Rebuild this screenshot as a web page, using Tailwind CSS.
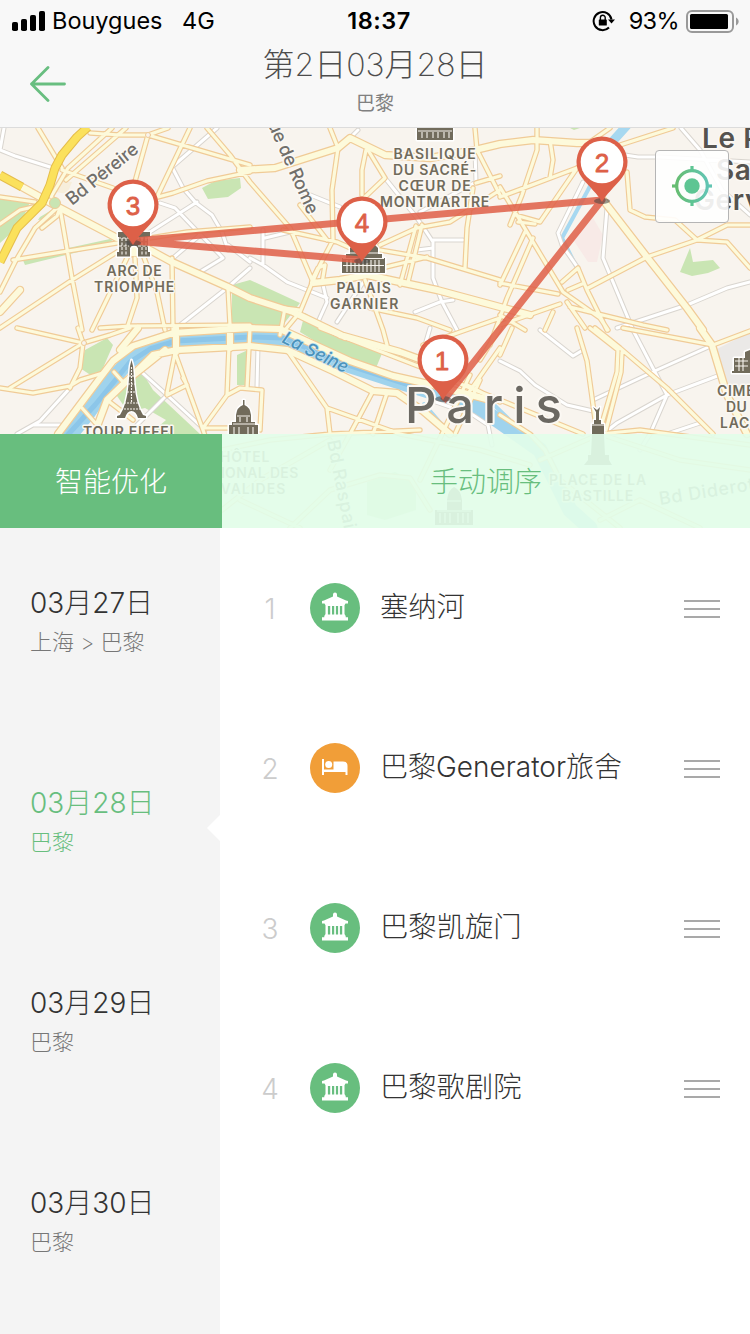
<!DOCTYPE html>
<html lang="zh-CN">
<head>
<meta charset="utf-8">
<title>第2日03月28日</title>
<script src="https://cdn.jsdelivr.net/npm/@tailwindcss/browser@4"></script>
</head>
<body class="w-[750px] h-[1334px] overflow-hidden bg-white font-['Inter','Noto_Sans_CJK_SC',sans-serif]">

<svg width="0" height="0" class="hidden">
  <defs>
    <symbol id="museum" viewBox="0 0 26 29">
      <path fill="#fff" d="M11 2.500a2 2 0 0 1 4 0V4.500l9 4 2 .5v2.500h-2.500l-1 1.700v8.800l1.200 2H26V28.400H0V25.200h2.300v-1.200l1.200-2v-8.800l-1-1.700H0V9l2-.5 9-4z"/>
      <path fill="#68be80" d="M5.900 14h2.300v8.500H5.900zM10 14h2.200v8.500H10zM13.900 14h2.200v8.500h-2.200zM17.900 14h2.300v8.500h-2.300zM23.700 25.200V24H26v1.200z"/>
    </symbol>
    <symbol id="bed" viewBox="0 0 26 18">
      <path fill="#fff" d="M0 0h2v10.500h9.500V2.500H21c3 0 4.500 1.500 4.500 4.500v9h-2v-3H2v3H0z"/>
      <circle cx="6.700" cy="5.600" r="3.500" fill="#fff"/>
    </symbol>
    <symbol id="grip" viewBox="0 0 36 20"><path d="M0 2h36M0 10h36M0 18h36" stroke="#a9a9a9" stroke-width="2"/></symbol>
    <g id="pin">
      <path d="M0 40C-4 32.500-13 24.500-19.800 16A25.500 25.500 0 1 1 19.800 16C13 24.500 4 32.500 0 40Z" fill="#dd6048"/>
      <circle r="21.300" fill="#fff"/>
    </g>
  </defs>
</svg>

<header class="flex h-[128px] flex-col border-b border-[#dcdcdc] bg-[#f8f8f8]">
  <div class="grid h-10 grid-cols-3 items-center text-[23.500px] leading-10 text-black">
    <div class="flex items-center pl-3 pt-px">
      <svg class="h-5 w-[33px]" viewBox="0 0 33 20"><rect y="11" width="6" height="9" rx="1.800"/><rect x="9" y="8" width="6" height="12" rx="1.800"/><rect x="18" y="4" width="6" height="16" rx="1.800"/><rect x="27" width="6" height="20" rx="1.800"/></svg>
      <span class="ml-[7px] w-[111px] whitespace-nowrap">Bouygues</span>
      <span class="ml-[19px]">4G</span>
    </div>
    <div class="pl-2 pt-px text-center font-semibold tracking-[0.5px]">18:37</div>
    <div class="flex items-center justify-end pr-[11px] pt-px">
      <svg class="mr-[13px] h-[22px] w-6" viewBox="0 0 24 22" fill="none" stroke="#000" stroke-width="2"><path d="M17 17.500A9 9 0 1 1 19.500 9.500"/><path d="M16 9.500h7l-3.500 4z" fill="#000" stroke="none"/><rect x="6.800" y="9.500" width="8" height="6" rx=".6" fill="#000" stroke="none"/><path d="M8.400 10V7.600a2.400 2.400 0 0 1 4.800 0V10" stroke-width="1.400"/></svg>
      <span class="mr-[7px] tracking-[-0.6px]">93%</span>
      <svg class="h-[23px] w-[53px]" viewBox="0 0 53 23"><rect x="1" y="1" width="46" height="21" rx="5" fill="none" stroke="#999" stroke-width="2"/><rect x="4" y="4" width="38" height="15" rx="1.500"/><path d="M50 7.500c3.500 1.500 3.500 6.500 0 8z" fill="#999"/></svg>
    </div>
  </div>
  <div class="grid flex-1 grid-cols-[100px_1fr_100px] items-center">
    <svg class="ml-[29px] h-9 w-[38px]" viewBox="0 0 38 36" fill="none" stroke="#68be80" stroke-width="2.800" stroke-linecap="round" stroke-linejoin="round"><path d="M19 1.500L2.500 18 19 34.500M2.500 18h33"/></svg>
    <div class="flex flex-col items-center">
      <h1 class="-mt-[5px] whitespace-nowrap text-[32px] leading-[46px] font-extralight text-[#4c4c4c]">第2日03月28日</h1>
      <p class="text-[19px] leading-8 text-[#808080]">巴黎</p>
    </div>
  </div>
</header>

<section class="relative h-[400px] overflow-hidden">
<svg class="block h-[400px] w-[750px]" viewBox="0 128 750 400" fill="none" stroke-linejoin="round" stroke-linecap="round">
  <defs>
    <path id="minor" d="M4 128L0 150L15 156L50 167M217 128L172 167L183 188L196 203L212 215L222 232L228 250M160 203L175 208L198 232L223 258L200 272M150 232L197 202M180 325L227 288L250 268M173 258L200 235M228 245L250 262M250 258L263 265L287 282L327 298M263 230V265M265 238L290 232M303 192L340 207M385 178L417 218L433 242V278L442 302L457 330M433 240H463M417 250L433 248M323 285L327 302L318 322M415 312L440 302L453 300M358 130L350 138M366 278L337 322M475 150L476 182L420 212M607 208L603 258L633 330L667 395L650 434L640 450M583 182L558 233L562 245L578 268M625 155L638 157L660 157L750 162M681 128L700 150L722 190L750 215M617 328L687 305L727 288L750 282M593 400L657 370L713 345M603 434L617 423L667 395L720 375M540 330L573 356L583 350M500 361L520 371L535 385L567 405L593 411M667 434L700 423M137 368L167 395L137 425M167 395L205 430M70 388L40 421L17 434M33 425H60M258 346L257 387M373 391L350 434M430 400L473 415L488 425L492 445M430 328L425 345"/>
    <path id="road" d="M38 128L62 168M112 128L68 168L52 195M126 128L66 180M90 133L120 135L148 135L168 128M148 135L250 165M148 135L134 185M190 128L157 197M207 128L230 155L250 182L290 228L313 282M62 170L113 188M158 197L173 193L207 181L250 172M60 208L72 278L82 330M13 260L117 243M0 328L72 280L117 252M92 330L127 258M128 325L137 298L135 258M143 255L157 292L165 330M172 258L173 330M100 328L130 326L250 325M228 288L230 325M150 238L187 232L250 227M0 197L35 202M0 224L20 210L42 205M57 208L35 228L28 240L15 262L0 292M50 195L60 208L57 216L42 228M330 128L338 148L332 190L333 240L320 265L312 283L300 312L285 330M366 150L362 170V195M368 150L385 178L365 197M283 230L337 242L355 250M300 205L327 240M365 280L383 330L387 345M380 245L417 228L450 222L500 190M380 250L427 258L500 280M422 225L408 282M416 226L400 285M382 268L427 257M475 128L477 150L500 195M473 188L467 228L465 268M476 183L500 176M370 308L417 318L450 330M318 268L325 265L322 283L312 280ZM300 310L285 308L280 335M537 128V150L522 195L510 225M550 140L553 160L550 178M500 197L577 168M500 187L527 232L563 292L600 318L608 330M627 172L630 210L645 217L675 220L697 240M588 288L647 257L697 240L727 225L750 225M697 240L727 242L750 268M525 232L500 285M533 238L507 298L490 345M515 215L540 222L577 168M518 222L535 224M500 283L558 294M560 304L500 325M562 282L578 268L587 290L607 330M568 290L582 284M570 307L643 325L667 330M567 302L585 328M545 330L553 312M500 315L525 330M620 145L673 128M590 142L610 128M17 328L83 343L110 335L130 328M83 343L78 328M83 343L80 368L70 388M10 388L80 345M0 388L33 393L70 386L80 380L103 373M175 353L167 393M175 353L203 430L210 450M167 395L187 385L183 378M229 346L227 395L203 428M203 428H230M227 395L240 388L262 390L260 430M247 388L250 328M82 408L98 426M107 400L133 420M114 372L123 382M287 350L327 408L330 434M327 408L400 434L480 450L530 465M373 391L350 434L330 470M387 393L373 434M320 328L423 368L470 388L500 400L583 434M383 330L387 345M500 348L467 395M470 375L443 432L420 480M480 380L455 434M467 385L500 402M500 328L480 360M500 415L530 434L545 450M577 328L587 361L597 434L590 460M595 328L620 348L667 388L713 434M590 328L618 350L617 372L600 430M622 352L621 372L606 430M623 328L713 345L750 331M512 328L500 355M423 345L500 318M222 450L270 440L330 434L420 430M222 510L260 480L330 440M240 500L300 528M290 528L330 490L380 475L410 478L430 510M540 460L600 434L680 460L750 470M600 434L640 430L750 445M545 450L560 480L620 528M600 520L640 500L700 528"/>
    <path id="avenue" d="M22 187L60 208L117 238M150 250L172 262L228 287L250 298L293 312L345 337M240 170L275 168L338 148L350 138L385 155L430 158L475 150L500 144L533 140L577 143L590 143M313 283L340 280L367 275L437 290L500 307L530 315M603 200L647 257L687 308L703 330M58 434L100 378L113 361L133 346L173 333L250 328L280 329L350 361L393 376L433 385L490 400M98 424L107 400L133 375L153 355L177 350L250 346L287 350L333 371L373 391L397 393L423 411L450 434M176 328V352M230 328V348M700 328L712 345L727 395L747 434M340 335L400 352L430 363M0 312L20 290M125 382L165 350M120 350L138 328"/>
    <path id="motorway" d="M88 127L77 137L62 155L55 168L50 185L42 203L17 228L10 242L0 262M0 175L22 187"/>
  </defs>

  <rect y="128" width="750" height="400" fill="#f8f4ee"/>
  <path fill="#c9e5b3" d="M0 198L30 202L20 225L0 243ZM202 188L215 181L240 178L241 188L228 197L208 199ZM22 258L110 239L115 243L25 265ZM40 217L50 211L53 213L45 219L38 220ZM232 285L250 280L300 303L283 325H232ZM305 313L345 337L383 351L376 368L333 352L300 332ZM680 272L690 248L693 262L713 260L720 268L708 273L692 276ZM85 350L107 338L113 345L103 368L95 378L80 368ZM115 393L142 372L153 390L200 434H150L166 420L145 408L128 412ZM237 355L248 350V385H237ZM570 128H580L574 130ZM367 482L395 472L416 483V510L385 520L367 515Z"/>
  <path fill="#f8eae7" d="M572 238L593 218L603 235L597 262L588 262Z"/>
  <path fill="#ebe9e7" d="M715 350L750 332V390L730 390Z"/>
  <path fill="#f7eedb" d="M60 180L72 182L67 194L56 192Z"/>
  <path stroke="#9fd3ed" stroke-width="15" d="M62 445L88 413L110 382L128 362L150 348L176 341L250 337L283 338L345 364L400 382L432 392L475 405L500 422L540 450L570 510L590 528"/>
  <path stroke="#8cc6e9" stroke-width="5" d="M65 438L95 405L130 362L150 349L176 341L250 337L283 338L345 364L400 382L432 392"/>
  <path stroke="#a7d8f0" stroke-width="9" d="M630 122L612 142"/>
  <path stroke="#a7d8f0" stroke-width="4" d="M612 142L588 190L562 238L578 270M424 404L450 434M492 403L520 430"/>

  <use href="#minor" stroke="#d9d5cf" stroke-width="5"/>
  <use href="#minor" stroke="#fff" stroke-width="3"/>
  <use href="#road" stroke="#f0cb97" stroke-width="5.500"/>
  <use href="#avenue" stroke="#f0cb97" stroke-width="8.500"/>
  <circle cx="134" cy="243" r="14" fill="#fdfadb" stroke="#f0cb97" stroke-width="1.500"/>
  <use href="#road" stroke="#fdfadb" stroke-width="3.200"/>
  <use href="#avenue" stroke="#fdfadb" stroke-width="6"/>
  <circle cx="55" cy="203" r="5.500" fill="#c9e5b3" stroke="#f0cb97"/>
  <circle cx="148" cy="135" r="2.500" fill="#f8f4ee" stroke="#f0cb97"/>
  <circle cx="84" cy="343" r="2.500" fill="#f8f4ee" stroke="#f0cb97"/>
  <use href="#motorway" stroke="#e5bd4b" stroke-width="9" stroke-linecap="butt"/>
  <use href="#motorway" stroke="#fbe15c" stroke-width="7" stroke-linecap="butt"/>

  <g stroke="#fff" stroke-width="3" paint-order="stroke" fill="#716b5b">
    <path d="M118 232H150V237H148V252H150V256.500H138V248A4.500 4.500 0 0 0 130 248V256.500H117V252H119V237H118Z"/>
    <path d="M342 273V258H346V254H350V248L354 244H374L378 248V254H382V258H385V273Z"/>
    <path d="M417 140V128H453V140Z"/>
    <path d="M117 418V416L120 415Q127 404 128.500 385L130 366L131.500 360L133 366L134.500 385Q136 404 143 415L146 416V418H138Q136 411 131.500 411Q127 411 125 418Z"/>
    <path d="M229 434V425H232V422H236V415Q237 407 243 405V400H244.500V405Q250 407 251 415V422H255V425H258V434Z"/>
    <path d="M592 434V424H594V420H596V412L593 407L597 410L600 407L599 412V420H601V424H604V434L605 455H609V460L612 465H584L588 460V455H591Z"/>
    <path d="M732 373V371H734V358H745V352L750 350V373Z"/>
    <path d="M435 525V510H447V500Q448 490 454 487Q461 490 462 500V510H473V525Z"/>
  </g>
  <g stroke="#f8f4ee" stroke-width="1.100" stroke-linecap="butt">
    <path d="M118 238H149M119 246H129M138 246H149M122 238V256M126 238V256M142 238V256M146 238V256" stroke-dasharray="3 1.500"/>
    <path d="M343 258.500H384M343 265.500H384M347 260V272M351 260V272M355 260V272M359 260V272M363 260V272M367 260V272M371 260V272M375 260V272M379 260V272M350 253H378"/>
    <path d="M418 131H452M422 132V138M427 132V138M433 132V138M438 132V138M444 132V138M449 132V138"/>
    <path d="M129 376H134M128 384H135M127 392H136M124 403H139M121 409H142M131.500 367V402" stroke-dasharray="2 1"/>
    <path d="M237 416H250M233 424H255M234 427V434M239 427V434M248 427V434M253 427V434M240 417V422M247 417V422M592 425H604"/>
    <path d="M735 361H748M735 366H748M739 358V371M743 353V371M447 501H461M437 511H471M440 513V523M445 513V523M450 513V523M458 513V523M463 513V523M468 513V523"/>
  </g>

  <g font-family="Inter, sans-serif" stroke="#fbf8f3" stroke-width="3" paint-order="stroke">
    <g font-size="14" font-weight="600" fill="#716b5b" text-anchor="middle" letter-spacing=".7">
      <text x="134.500" y="275.500" textLength="56">ARC DE</text>
      <text x="134.500" y="291.500" textLength="81">TRIOMPHE</text>
      <text x="364" y="293" textLength="55">PALAIS</text>
      <text x="364.500" y="309" textLength="69">GARNIER</text>
      <text x="435" y="159" textLength="83">BASILIQUE</text>
      <text x="435" y="175" textLength="84">DU SACRÉ-</text>
      <text x="435" y="191" textLength="73">CŒUR DE</text>
      <text x="435" y="207" textLength="110">MONTMARTRE</text>
      <text x="130.500" y="437" textLength="95">TOUR EIFFEL</text>
      <text x="245" y="462" textLength="50">HÔTEL</text>
      <text x="245" y="478" textLength="108">NATIONAL DES</text>
      <text x="245" y="494" textLength="82">INVALIDES</text>
      <text x="598" y="485" textLength="98">PLACE DE LA</text>
      <text x="598" y="501" textLength="72">BASTILLE</text>
      <text x="717" y="396" text-anchor="start" textLength="81">CIMETIÈRE</text>
      <text x="726" y="412" text-anchor="start" textLength="62">DU PÈRE</text>
      <text x="720" y="428" text-anchor="start" textLength="76">LACHAISE</text>
    </g>
    <g font-size="18" font-weight="500" fill="#716f6b">
      <text transform="translate(72 206) rotate(-39)" textLength="87">Bd Péreire</text>
      <text transform="translate(263 114) rotate(66)" textLength="111">Rue de Rome</text>
      <text transform="translate(327 441) rotate(79)" textLength="95">Bd Raspail</text>
      <text transform="translate(660 505) rotate(-9)" textLength="96">Bd Diderot</text>
    </g>
    <text transform="translate(281 342) rotate(26)" font-size="17.500" font-weight="500" font-style="italic" fill="#4a92bb" stroke="#bfe0f1" stroke-width="1.500" textLength="71">La Seine</text>
    <g font-size="28" font-weight="600" fill="#55534f" letter-spacing=".6">
      <text x="702" y="148">Le Pré-</text>
      <text x="716" y="180">Saint-</text>
      <text x="694" y="210">Gervais</text>
    </g>
    <text x="405" y="423" font-size="49" font-weight="500" fill="#6b6862" stroke-width="4" textLength="157" lengthAdjust="spacing">Paris</text>
  </g>

  <g stroke="#df6048" stroke-opacity=".86" stroke-width="7" stroke-linecap="butt">
    <path d="M443 401L602 200L133 241L362 260"/>
  </g>
  <g fill="#444" fill-opacity=".55"><ellipse cx="602" cy="201" rx="8" ry="3"/><ellipse cx="443" cy="399" rx="8" ry="3"/><ellipse cx="133" cy="243" rx="8" ry="3"/><ellipse cx="362" cy="261" rx="8" ry="3"/></g>
  <use href="#pin" x="133" y="205"/><use href="#pin" x="602" y="162"/><use href="#pin" x="362" y="222"/><use href="#pin" x="443" y="360"/>
  <g font-family="Liberation Sans, sans-serif" font-size="26" stroke="#dd6048" stroke-width=".8" fill="#dd6048" text-anchor="middle">
    <text x="133" y="215">3</text><text x="602" y="172">2</text><text x="362" y="232">4</text><text x="442" y="370">1</text>
  </g>
</svg>

  <button class="absolute left-[655px] top-[22px] flex h-[73px] w-[74px] items-center justify-center rounded-[4px] border border-[#b5b5b5] bg-white/90">
    <svg class="-mt-px h-[42px] w-[42px]" viewBox="0 0 42 42" fill="none" stroke-width="3.200"><defs><linearGradient id="loc"><stop stop-color="#66bd72"/><stop offset="1" stop-color="#62c5b3"/></linearGradient></defs><circle cx="21" cy="21" r="15.300" stroke="url(#loc)"/><circle cx="21" cy="21" r="7.700" fill="#5ec593"/><path d="M21 1v6M21 35v6" stroke="#5ec593"/><path d="M1 21h6" stroke="#66bd72"/><path d="M35 21h6" stroke="#62c5b3"/></svg>
  </button>

  <div class="absolute inset-x-0 bottom-0 flex h-[94px] text-[28px] font-light">
    <button class="w-[222px] bg-[#68be7e] pt-0.5 text-white">智能优化</button>
    <button class="flex-1 bg-[#e2fde9]/92 pt-0.5 text-[#68be7e]">手动调序</button>
  </div>
</section>

<main class="flex h-[806px]">
  <aside class="w-[220px] bg-[#f4f4f4]">
    <div class="h-[200px] pl-[30px] pt-[55px]"><p class="text-[28px] leading-[41px] font-light text-[#333]">03月27日</p><p class="text-[22px] leading-9 font-extralight text-[#777]">上海 &gt; 巴黎</p></div>
    <div class="relative h-[200px] pl-[30px] pt-[55px] text-[#68be7e]"><p class="text-[28px] leading-[41px] font-light">03月28日</p><p class="text-[22px] leading-9 font-light">巴黎</p>
      <svg class="absolute right-0 top-[87px] h-[26px] w-[13px]" viewBox="0 0 13 26"><path d="M13 0v26L0 13z" fill="#fff"/></svg></div>
    <div class="h-[200px] pl-[30px] pt-[55px]"><p class="text-[28px] leading-[41px] font-light text-[#333]">03月29日</p><p class="text-[22px] leading-9 font-extralight text-[#777]">巴黎</p></div>
    <div class="h-[200px] pl-[30px] pt-[55px]"><p class="text-[28px] leading-[41px] font-light text-[#333]">03月30日</p><p class="text-[22px] leading-9 font-extralight text-[#777]">巴黎</p></div>
  </aside>
  <ul class="flex-1">
    <li class="flex h-40 items-center pr-[30px]"><span class="w-[90px] pl-[10px] pt-px text-center text-[28px] font-light text-[#ccc]">1</span><span class="flex size-[50px] items-center justify-center rounded-full bg-[#68be7e]"><svg class="-mt-[3px] h-[29px] w-[26px]"><use href="#museum"/></svg></span><span class="ml-5 -mt-0.5 flex-1 text-[28.300px] font-light text-[#333]">塞纳河</span><svg class="mt-[2px] h-5 w-9"><use href="#grip"/></svg></li>
    <li class="flex h-40 items-center pr-[30px]"><span class="w-[90px] pl-[10px] pt-px text-center text-[28px] font-light text-[#ccc]">2</span><span class="flex size-[50px] items-center justify-center rounded-full bg-[#f19e38]"><svg class="h-[18px] w-[26px]"><use href="#bed"/></svg></span><span class="ml-5 -mt-0.5 flex-1 text-[28px] font-light text-[#333]">巴黎Generator旅舍</span><svg class="mt-[2px] h-5 w-9"><use href="#grip"/></svg></li>
    <li class="flex h-40 items-center pr-[30px]"><span class="w-[90px] pl-[10px] pt-px text-center text-[28px] font-light text-[#ccc]">3</span><span class="flex size-[50px] items-center justify-center rounded-full bg-[#68be7e]"><svg class="-mt-[3px] h-[29px] w-[26px]"><use href="#museum"/></svg></span><span class="ml-5 -mt-0.5 flex-1 text-[28.300px] font-light text-[#333]">巴黎凯旋门</span><svg class="mt-[2px] h-5 w-9"><use href="#grip"/></svg></li>
    <li class="flex h-40 items-center pr-[30px]"><span class="w-[90px] pl-[10px] pt-px text-center text-[28px] font-light text-[#ccc]">4</span><span class="flex size-[50px] items-center justify-center rounded-full bg-[#68be7e]"><svg class="-mt-[3px] h-[29px] w-[26px]"><use href="#museum"/></svg></span><span class="ml-5 -mt-0.5 flex-1 text-[28.300px] font-light text-[#333]">巴黎歌剧院</span><svg class="mt-[2px] h-5 w-9"><use href="#grip"/></svg></li>
  </ul>
</main>
</body>
</html>
